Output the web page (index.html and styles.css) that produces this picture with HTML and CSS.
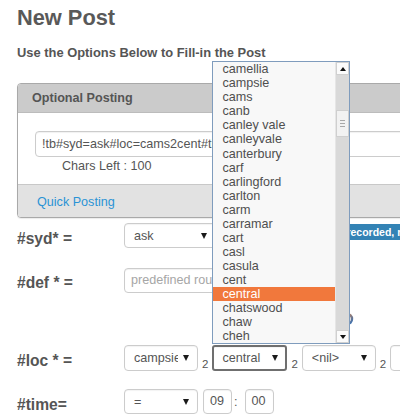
FILE: index.html
```html
<!DOCTYPE html>
<html lang="en">
<head>
    <meta charset="UTF-8">
    <meta name="viewport" content="width=device-width, initial-scale=1.0">
    <title>New Post</title>
    <link rel="stylesheet" href="styles.css">
</head>
<body>
    <div class="page">
        <h1 class="title">New Post</h1>
        <h5 class="subtitle">Use the Options Below to Fill-in the Post</h5>

        <div class="panel">
            <div class="panel-heading">Optional Posting</div>
            <div class="panel-body">
                <div class="text-input quick-input">!tb#syd=ask#loc=cams2cent#time=09:00</div>
                <div class="chars-left">Chars Left : 100</div>
            </div>
            <div class="panel-footer"><a href="javascript:;" class="quick-link">Quick Posting</a></div>
        </div>

        <!-- 表单行 -->
        <div class="form-row">
            <label class="row-label">#syd* =</label>
            <div class="row-controls">
                <div class="select select-ask"><span class="select-text">ask</span><i class="select-arrow"></i></div>
                <span class="badge">Not recorded, not posted</span>
            </div>
        </div>

        <div class="form-row">
            <label class="row-label">#def * =</label>
            <div class="row-controls">
                <div class="text-input def-input placeholder">predefined route</div>
            </div>
        </div>

        <div class="form-row or-row">
            <div class="row-controls">
                <svg class="or-icon" width="14" height="14" viewBox="0 0 14 14">
                    <defs>
                        <linearGradient id="ring" x1="0" y1="0" x2="1" y2="1">
                            <stop offset="0" stop-color="#f0883c"/>
                            <stop offset="1" stop-color="#2f6fb8"/>
                        </linearGradient>
                    </defs>
                    <circle cx="7" cy="7" r="5" fill="none" stroke="url(#ring)" stroke-width="2.4"/>
                </svg>
            </div>
        </div>

        <div class="form-row loc-row">
            <label class="row-label">#loc * =</label>
            <div class="row-controls">
                <div class="select"><span class="select-text">campsie</span><i class="select-arrow"></i></div>
                <span class="weight">2</span>
                <div class="select select-focus">
                    <span class="select-text">central</span><i class="select-arrow"></i>
                    <!-- 展开的下拉列表 -->
                    <div class="listbox">
                        <ul class="options">
                            <li>camellia</li>
                            <li>campsie</li>
                            <li>cams</li>
                            <li>canb</li>
                            <li>canley vale</li>
                            <li>canleyvale</li>
                            <li>canterbury</li>
                            <li>carf</li>
                            <li>carlingford</li>
                            <li>carlton</li>
                            <li>carm</li>
                            <li>carramar</li>
                            <li>cart</li>
                            <li>casl</li>
                            <li>casula</li>
                            <li>cent</li>
                            <li class="selected">central</li>
                            <li>chatswood</li>
                            <li>chaw</li>
                            <li>cheh</li>
                        </ul>
                        <div class="scrollbar">
                            <div class="scroll-btn"><i class="up"></i></div>
                            <div class="scroll-track"><div class="scroll-thumb"><span></span><span></span><span></span></div></div>
                            <div class="scroll-btn"><i class="down"></i></div>
                        </div>
                    </div>
                </div>
                <span class="weight">2</span>
                <div class="select"><span class="select-text">&lt;nil&gt;</span><i class="select-arrow"></i></div>
                <span class="weight">2</span>
                <div class="select"><span class="select-text">&lt;nil&gt;</span><i class="select-arrow"></i></div>
            </div>
        </div>

        <div class="form-row">
            <label class="row-label">#time=</label>
            <div class="row-controls">
                <div class="select"><span class="select-text">=</span><i class="select-arrow"></i></div>
                <div class="text-input time-input">09</div>
                <span class="colon">:</span>
                <div class="text-input time-input">00</div>
            </div>
        </div>
    </div>
</body>
</html>
```

FILE: styles.css
```css
html,
body{
    margin: 0px;
    padding: 0px;
    overflow: hidden;
    background: #ffffff;
}
body{
    font-family: "Liberation Sans", Arial, sans-serif;
    font-size: 12.6px;
    color: #555555;
}
.page{
    width: 620px;
    padding: 4.5px 0px 0px 17px;
}
.title{
    margin: 0px;
    font-size: 21.8px;
    line-height: 26px;
    font-weight: bold;
    color: #595959;
}
.subtitle{
    margin: 13px 0px 0px 0px;
    font-size: 12.9px;
    line-height: 18px;
    font-weight: bold;
    color: #555555;
}

/* 面板 */
.panel{
    margin-top: 21.5px;
    width: 600px;
    border: 1px solid #a9a9a9;
    border-radius: 4px;
    background: #ffffff;
    box-shadow: 0px 1px 1px rgba(0, 0, 0, .08);
}
.panel-heading{
    padding: 5px 14px;
    line-height: 18px;
    font-weight: bold;
    background: #cbcbcb;
    border-bottom: 1px solid #bcbcbc;
    border-radius: 3px 3px 0px 0px;
    color: #555555;
}
.panel-body{
    padding: 18px 17px 9px 17px;
}
.panel-footer{
    padding: 8px 19px 6px 19px;
    line-height: 18px;
    background: #e2e2e2;
    border-top: 1px solid #c8c8c8;
    border-radius: 0px 0px 3px 3px;
}
.quick-link{
    color: #2a93d5;
    text-decoration: none;
}
.chars-left{
    margin-left: 27px;
    line-height: 18px;
}

/* 输入框 */
.text-input{
    box-sizing: border-box;
    height: 26px;
    line-height: 24px;
    padding: 0px 6px;
    border: 1px solid #cccccc;
    border-radius: 4px;
    background: #ffffff;
    box-shadow: inset 0px 1px 1px rgba(0, 0, 0, .06);
    white-space: nowrap;
    overflow: hidden;
    color: #555555;
}
.quick-input{
    width: 560px;
}
.def-input{
    width: 200px;
    height: 25px;
    line-height: 23px;
}
.placeholder{
    color: #a6a6a6;
}
.time-input{
    width: 29px;
    height: 25px;
    line-height: 23px;
    margin-left: 5px;
}
.colon{
    width: 3.5px;
    margin: 0px 2px 0px 2px;
}

/* 表单行 */
.form-row{
    display: flex;
    align-items: flex-start;
    margin-top: 19px;
}
.panel + .form-row{
    margin-top: 5px;
}
.loc-row{
    margin-top: 19px;
}
.loc-row + .form-row{
    margin-top: 18px;
}
.or-row{
    height: 14px;
    padding-left: 107px;
}
.or-icon{
    display: block;
    margin: 0px 0px 0px 216px;
}
.row-label{
    width: 107px;
    flex: none;
    margin-top: 5.6px;
    font-size: 15.6px;
    line-height: 20px;
    font-weight: bold;
    color: #555555;
}
.row-controls{
    display: flex;
    align-items: center;
}

/* 下拉框 */
.select{
    position: relative;
    box-sizing: border-box;
    display: flex;
    align-items: center;
    width: 74px;
    height: 25px;
    padding: 0px 8px 0px 9px;
    border: 1px solid #cccccc;
    border-radius: 4px;
    background: #ffffff;
    box-shadow: inset 0px 1px 1px rgba(0, 0, 0, .05);
}
.loc-row .select{
    height: 26px;
}
.select-text{
    flex: 1;
    overflow: hidden;
    white-space: nowrap;
    color: #555555;
}
.select-arrow{
    flex: none;
    width: 0px;
    height: 0px;
    margin-left: 5px;
    border-left: 3.5px solid transparent;
    border-right: 3.5px solid transparent;
    border-top: 6px solid #1a1a1a;
}
.select-ask{
    width: 92px;
}
.select-focus{
    width: 75px;
    border: 2px solid #6f6f6f;
    border-radius: 3px;
    padding-left: 8px;
    padding-right: 7px;
}
.weight{
    align-self: flex-end;
    margin: 0px 4px 0px 4px;
    font-size: 11.5px;
    line-height: 14px;
    color: #555555;
}
.badge{
    align-self: flex-start;
    margin: 1px 0px 0px 105px;
    padding: 0px 5px;
    height: 16px;
    line-height: 16px;
    font-size: 10.5px;
    font-weight: bold;
    color: #ffffff;
    background: #3383b5;
    border-radius: 3px;
    white-space: nowrap;
}

/* 展开的列表 */
.listbox{
    position: absolute;
    left: -2px;
    bottom: 100%;
    margin-bottom: 3px;
    display: flex;
    width: 138px;
    box-sizing: border-box;
    border: 1px solid #7f9cbd;
    background: #f8f8f8;
    z-index: 10;
}
.options{
    list-style: none;
    margin: 0px;
    padding: 0px;
    flex: 1;
}
.options li{
    height: 14.05px;
    line-height: 14.05px;
    padding-left: 9px;
    font-size: 12.6px;
    color: #4f4f4f;
    white-space: nowrap;
}
.options li.selected{
    background: #f1783c;
    color: #ffffff;
}
.scrollbar{
    width: 13px;
    display: flex;
    flex-direction: column;
    background: #d9d9d9;
    border-left: 1px solid #e6e6e6;
}
.scroll-btn{
    height: 13px;
    display: flex;
    align-items: center;
    justify-content: center;
    background: #fbfbfb;
    border: 1px solid #d0d0d0;
    box-sizing: border-box;
}
.scroll-btn i{
    width: 0px;
    height: 0px;
    border-left: 3.5px solid transparent;
    border-right: 3.5px solid transparent;
}
.scroll-btn .up{
    border-bottom: 4px solid #111111;
}
.scroll-btn .down{
    border-top: 4px solid #111111;
}
.scroll-track{
    flex: 1;
    padding-top: 35px;
}
.scroll-thumb{
    height: 27px;
    box-sizing: border-box;
    border: 1px solid #cfcfcf;
    background: #f2f2f2;
    display: flex;
    flex-direction: column;
    align-items: center;
    justify-content: center;
    gap: 2px;
}
.scroll-thumb span{
    width: 5px;
    height: 1px;
    background: #a8a8a8;
}
```
